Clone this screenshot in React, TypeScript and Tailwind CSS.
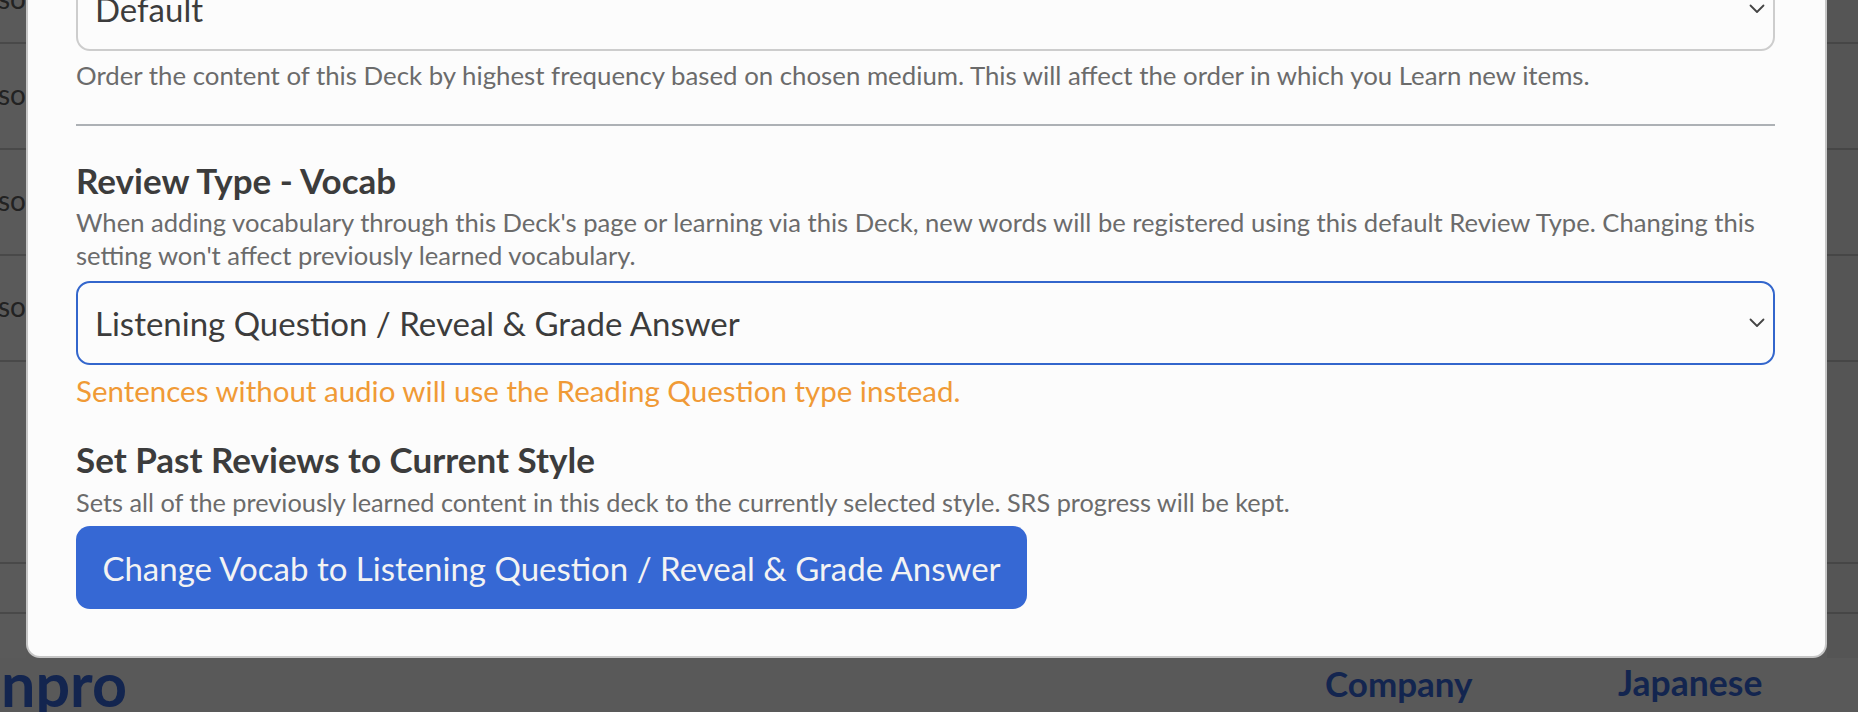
import React from "react";

const stripRows = [
  { h: "h-[44px]", text: true },
  { h: "h-[106px]", text: true },
  { h: "h-[106px]", text: true },
  { h: "h-[106px]", text: true },
  { h: "h-[202px]", text: false },
  { h: "h-[50px]", text: false },
];

function Chevron() {
  return (
    <svg width="16" height="10" viewBox="0 0 16 10" fill="none" className="shrink-0">
      <path d="M1.5 1.5 L8 8 L14.5 1.5" stroke="#444" strokeWidth="1.8" strokeLinecap="round" strokeLinejoin="round" />
    </svg>
  );
}

function Select({ value, active }: { value: string; active?: boolean }) {
  return (
    <div
      className={`flex h-[84px] w-full items-center justify-between rounded-[14px] border-2 pl-[17px] pr-[8px] text-[33px] leading-[40px] text-[#3c3c3c] ${
        active ? "border-[#3366cc]" : "border-[#cdcdcd]"
      }`}
    >
      <span>{value}</span>
      <Chevron />
    </div>
  );
}

function Strip({ side }: { side: "left" | "right" }) {
  return (
    <div
      className={`flex shrink-0 flex-col overflow-hidden ${
        side === "left" ? "w-[26px] bg-[#5a5a5a]" : "flex-1 bg-[#555555]"
      }`}
    >
      {stripRows.map((row, i) => (
        <div
          key={i}
          className={`${row.h} flex shrink-0 items-center justify-end overflow-hidden border-b-2 ${
            side === "left" ? "border-[#494949]" : "border-[#464646]"
          } ${i === 0 ? "items-start" : ""}`}
        >
          {side === "left" && row.text && (
            <span className={`whitespace-nowrap text-[28px] leading-[28px] text-[#222] ${i === 0 ? "-mt-[16px]" : "mb-[4px]"}`}>
              so
            </span>
          )}
        </div>
      ))}
    </div>
  );
}

export default function App() {
  return (
    <div className="flex h-[712px] w-full flex-col overflow-hidden bg-[#595959] font-['Lato',sans-serif]">
      <div className="flex h-[658px] shrink-0">
        <Strip side="left" />

        <div className="w-[1801px] shrink-0 overflow-hidden rounded-b-[14px] border-2 border-t-0 border-[#c6c6c6] bg-[#fcfcfc] pl-[48px] pr-[50px]">
          <div className="-mt-[33px]">
            <Select value="Default" />
          </div>

          <p className="mt-[8px] text-[25.8px] leading-[33px] text-[#6b6b6b]">
            Order the content of this Deck by highest frequency based on chosen medium. This will affect the order in which you Learn new items.
          </p>

          <div className="mt-[32px] h-[2px] bg-[#adb1b5]" />

          <h2 className="mt-[34px] text-[35px] font-bold leading-[40px] text-[#3c3c3c]">Review Type - Vocab</h2>
          <p className="mt-[6px] whitespace-nowrap text-[25.6px] leading-[33px] text-[#6b6b6b]">
            When adding vocabulary through this Deck's page or learning via this Deck, new words will be registered using this default Review Type. Changing this
            <br />
            setting won't affect previously learned vocabulary.
          </p>

          <div className="mt-[9px]">
            <Select value="Listening Question / Reveal & Grade Answer" active />
          </div>

          <p className="mt-[8px] text-[29.5px] leading-[36px] text-[#f09a36]">
            Sentences without audio will use the Reading Question type instead.
          </p>

          <h2 className="mt-[30px] text-[35px] font-bold leading-[40px] text-[#3c3c3c]">Set Past Reviews to Current Style</h2>
          <p className="mt-[7px] text-[25.3px] leading-[33px] text-[#6b6b6b]">
            Sets all of the previously learned content in this deck to the currently selected style. SRS progress will be kept.
          </p>

          <button className="mt-[7px] flex h-[83px] w-[951px] items-center justify-center rounded-[14px] bg-[#3668d4] text-[33px] leading-[40px] text-[#f3f3f3]">
            Change Vocab to Listening Question / Reveal &amp; Grade Answer
          </button>
        </div>

        <Strip side="right" />
      </div>

      <div className="flex h-[54px] shrink-0 items-start text-[#13254f]">
        <div className="flex w-[127px] shrink-0 justify-end overflow-hidden">
          <span className="-mt-[4px] whitespace-nowrap text-[61px] font-bold leading-[60px]">npro</span>
        </div>
        <div className="ml-[1198px] w-[293px] shrink-0 pt-[5px] text-[35px] font-bold leading-[40px]">Company</div>
        <div className="pt-[5px] text-[35.5px] font-bold leading-[40px]">Japanese</div>
      </div>
    </div>
  );
}
